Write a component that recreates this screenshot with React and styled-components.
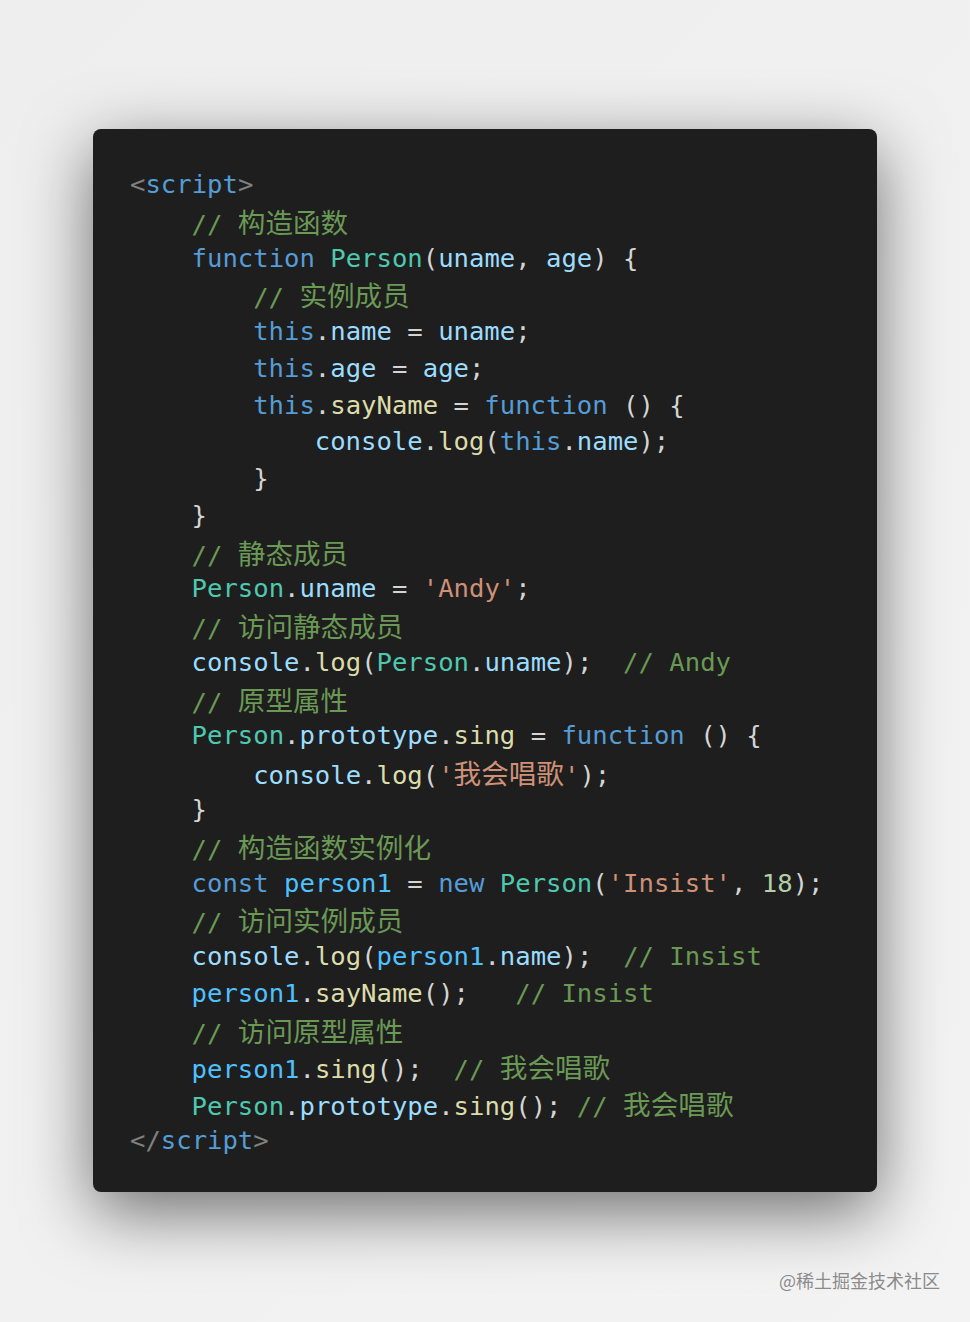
import styled, { createGlobalStyle } from 'styled-components';

const GlobalStyle = createGlobalStyle`
  html, body {
    margin: 0;
    padding: 0;
    background: #f0f0f0;
  }
`;

const palette = {
  punct: '#808080',
  tag: '#569cd6',
  kw: '#569cd6',
  cls: '#4ec9b0',
  prop: '#9cdcfe',
  fn: '#dcdcaa',
  str: '#ce9178',
  num: '#b5cea8',
  txt: '#d4d4d4',
  cmt: '#6a9955',
  cst: '#4fc1ff'
};

// each line: indent level + list of [kind, text]
const lines = [
  [0, [['punct', '<'], ['tag', 'script'], ['punct', '>']]],
  [1, [['cmt', '// 构造函数']]],
  [1, [['kw', 'function'], ['txt', ' '], ['cls', 'Person'], ['txt', '('], ['prop', 'uname'], ['txt', ', '], ['prop', 'age'], ['txt', ') {']]],
  [2, [['cmt', '// 实例成员']]],
  [2, [['kw', 'this'], ['txt', '.'], ['prop', 'name'], ['txt', ' = '], ['prop', 'uname'], ['txt', ';']]],
  [2, [['kw', 'this'], ['txt', '.'], ['prop', 'age'], ['txt', ' = '], ['prop', 'age'], ['txt', ';']]],
  [2, [['kw', 'this'], ['txt', '.'], ['fn', 'sayName'], ['txt', ' = '], ['kw', 'function'], ['txt', ' () {']]],
  [3, [['prop', 'console'], ['txt', '.'], ['fn', 'log'], ['txt', '('], ['kw', 'this'], ['txt', '.'], ['prop', 'name'], ['txt', ');']]],
  [2, [['txt', '}']]],
  [1, [['txt', '}']]],
  [1, [['cmt', '// 静态成员']]],
  [1, [['cls', 'Person'], ['txt', '.'], ['prop', 'uname'], ['txt', ' = '], ['str', "'Andy'"], ['txt', ';']]],
  [1, [['cmt', '// 访问静态成员']]],
  [1, [['prop', 'console'], ['txt', '.'], ['fn', 'log'], ['txt', '('], ['cls', 'Person'], ['txt', '.'], ['prop', 'uname'], ['txt', ');  '], ['cmt', '// Andy']]],
  [1, [['cmt', '// 原型属性']]],
  [1, [['cls', 'Person'], ['txt', '.'], ['prop', 'prototype'], ['txt', '.'], ['fn', 'sing'], ['txt', ' = '], ['kw', 'function'], ['txt', ' () {']]],
  [2, [['prop', 'console'], ['txt', '.'], ['fn', 'log'], ['txt', '('], ['str', "'我会唱歌'"], ['txt', ');']]],
  [1, [['txt', '}']]],
  [1, [['cmt', '// 构造函数实例化']]],
  [1, [['kw', 'const'], ['txt', ' '], ['cst', 'person1'], ['txt', ' = '], ['kw', 'new'], ['txt', ' '], ['cls', 'Person'], ['txt', '('], ['str', "'Insist'"], ['txt', ', '], ['num', '18'], ['txt', ');']]],
  [1, [['cmt', '// 访问实例成员']]],
  [1, [['prop', 'console'], ['txt', '.'], ['fn', 'log'], ['txt', '('], ['cst', 'person1'], ['txt', '.'], ['prop', 'name'], ['txt', ');  '], ['cmt', '// Insist']]],
  [1, [['cst', 'person1'], ['txt', '.'], ['fn', 'sayName'], ['txt', '();   '], ['cmt', '// Insist']]],
  [1, [['cmt', '// 访问原型属性']]],
  [1, [['cst', 'person1'], ['txt', '.'], ['fn', 'sing'], ['txt', '();  '], ['cmt', '// 我会唱歌']]],
  [1, [['cls', 'Person'], ['txt', '.'], ['prop', 'prototype'], ['txt', '.'], ['fn', 'sing'], ['txt', '(); '], ['cmt', '// 我会唱歌']]],
  [0, [['punct', '</'], ['tag', 'script'], ['punct', '>']]]
];

const splitCjk = (text) => text.split(/([\u4e00-\u9fff]+)/).filter(Boolean);

const App = () => {
  return (
    <Page>
      <GlobalStyle />
      <Card>
        <Code>
          {lines.map(([level, tokens], i) => (
            <Line key={i} $level={level}>
              {tokens.map(([kind, text], j) => (
                <Tok key={j} $kind={kind}>
                  {splitCjk(text).map((part, k) =>
                    /[\u4e00-\u9fff]/.test(part) ? <Cjk key={k}>{part}</Cjk> : part
                  )}
                </Tok>
              ))}
            </Line>
          ))}
        </Code>
      </Card>
      <Watermark>@稀土掘金技术社区</Watermark>
    </Page>
  );
};

const Page = styled.div`
  min-height: 1322px;
  box-sizing: border-box;
  padding: 129px 30px 0;
  display: flex;
  flex-direction: column;
  align-items: center;
  background: linear-gradient(135deg, #eeeeee 0%, #f1f1f1 60%, #f3f3f3 100%);
`;

const Card = styled.div`
  width: 784px;
  height: 1063px;
  box-sizing: border-box;
  padding: 37px 37px 34px;
  background: #1e1e1e;
  border-radius: 8px;
  box-shadow: 0 20px 68px rgba(0, 0, 0, 0.55);
`;

const Code = styled.div`
  font-family: "DejaVu Sans Mono", "Liberation Mono", "Noto Sans CJK SC", monospace;
  font-size: 25.6px;
  line-height: 36.77px;
  white-space: pre;
  color: #d4d4d4;
`;

const Line = styled.div`
  padding-left: ${(p) => p.$level * 61.6}px;
  height: 36.77px;
`;

const Tok = styled.span`
  color: ${(p) => palette[p.$kind]};
`;

const Cjk = styled.span`
  font-family: "Noto Sans CJK SC", sans-serif;
  font-size: 27.6px;
`;

const Watermark = styled.div`
  align-self: flex-end;
  margin-top: 76px;
  font-family: "Noto Sans CJK SC", sans-serif;
  font-size: 18px;
  line-height: 24px;
  color: #8a8a8a;
  text-shadow: 0 0 1px rgba(255, 255, 255, 0.6);
`;

export default App;
